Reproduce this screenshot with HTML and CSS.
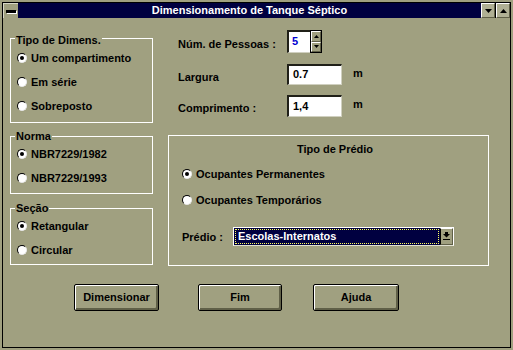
FILE: index.html
```html
<!DOCTYPE html>
<html>
<head>
<meta charset="utf-8">
<link rel="stylesheet" href="styles.css">
</head>
<body>
<div class="window">
  <div class="titlebar">
    <div class="sysmenu"><span class="sysbar"></span></div>
    <div class="caption">Dimensionamento de Tanque Séptico</div>
    <div class="tbtn"><svg width="7" height="4" viewBox="0 0 7 4"><polygon points="0,0 7,0 3.5,4" fill="#000"/></svg></div>
    <div class="tsep"></div>
    <div class="tbtn"><svg width="7" height="4" viewBox="0 0 7 4"><polygon points="0,4 7,4 3.5,0" fill="#000"/></svg></div>
  </div>
  <div class="main">
    <div class="leftcol">
      <div class="group g1">
        <div class="group-title">Tipo de Dimens.</div>
        <div class="opt"><span class="radio on"></span>Um compartimento</div>
        <div class="opt"><span class="radio"></span>Em série</div>
        <div class="opt"><span class="radio"></span>Sobreposto</div>
      </div>
      <div class="group g2">
        <div class="group-title">Norma</div>
        <div class="opt"><span class="radio on"></span>NBR7229/1982</div>
        <div class="opt"><span class="radio"></span>NBR7229/1993</div>
      </div>
      <div class="group g3">
        <div class="group-title">Seção</div>
        <div class="opt"><span class="radio on"></span>Retangular</div>
        <div class="opt"><span class="radio"></span>Circular</div>
      </div>
    </div>
    <div class="rightcol">
      <div class="frow r1">
        <div class="flabel">Núm. de Pessoas :</div>
        <div class="spin">
          <div class="spinfield">5</div>
          <div class="spinbtns">
            <div class="sbtn"><svg width="5" height="3" viewBox="0 0 5 3"><polygon points="0,3 5,3 2.5,0" fill="#000"/></svg></div>
            <div class="sbtn"><svg width="5" height="3" viewBox="0 0 5 3"><polygon points="0,0 5,0 2.5,3" fill="#000"/></svg></div>
          </div>
        </div>
      </div>
      <div class="frow r2">
        <div class="flabel">Largura</div>
        <div class="input h21">0.7</div>
        <div class="unit">m</div>
      </div>
      <div class="frow r3">
        <div class="flabel">Comprimento :</div>
        <div class="input h22">1,4</div>
        <div class="unit">m</div>
      </div>
      <div class="pbox">
        <div class="ptitle">Tipo de Prédio</div>
        <div class="popts">
          <div class="opt tall"><span class="radio on"></span>Ocupantes Permanentes</div>
          <div class="opt tall"><span class="radio"></span>Ocupantes Temporários</div>
        </div>
        <div class="prow">
          <div class="plabel">Prédio :</div>
          <div class="combo">
            <div class="combofield"><span class="combotext">Escolas-Internatos</span></div>
            <div class="combobtn"><svg width="7" height="9" viewBox="0 0 7 9"><rect x="2" y="0" width="3" height="2" fill="#000"/><polygon points="0,2 7,2 3.5,5.5" fill="#000"/><rect x="0" y="7" width="7" height="1" fill="#000"/></svg></div>
          </div>
        </div>
      </div>
    </div>
  </div>
  <div class="buttons">
    <div class="btn b1">Dimensionar</div>
    <div class="btn b2">Fim</div>
    <div class="btn b3">Ajuda</div>
  </div>
</div>
</body>
</html>
```

FILE: styles.css
```css
* { box-sizing: border-box; }
body {
  margin: 0;
  background: #a0a080;
  font: bold 11px "Liberation Sans", Arial, sans-serif;
  color: #000;
  width: 513px;
  height: 350px;
  overflow: hidden;
}
.window {
  margin: 2px;
  width: 509px;
  height: 346px;
  border: 1px solid #000;
  display: flex;
  flex-direction: column;
}
.titlebar {
  display: flex;
  height: 15px;
}
.sysmenu {
  width: 15px;
  display: flex;
  align-items: center;
  justify-content: center;
  border-top: 1px solid #d8d8c8;
  border-left: 1px solid #d8d8c8;
}
.sysbar {
  width: 10px;
  height: 3px;
  background: #000;
  box-shadow: 1px 1px 0 #fff;
}
.caption {
  flex: 1;
  background: #000040;
  color: #fff;
  text-align: center;
  line-height: 15px;
}
.tbtn {
  width: 14px;
  display: flex;
  align-items: center;
  justify-content: center;
  background: #b0b094;
  border-top: 1px solid #fff;
  border-left: 1px solid #fff;
  border-right: 1px solid #606048;
  border-bottom: 1px solid #606048;
}
.tsep { width: 1px; background: #000; }

.main {
  display: flex;
  padding-left: 7px;
  gap: 15px;
  height: 248px;
}
.leftcol { width: 143px; }
.group {
  border: 1px solid #fff;
  padding-left: 6px;
}
.group-title {
  display: block;
  width: max-content;
  margin: -7px 0 0 -2px;
  padding: 0 1px;
  line-height: 12px;
  background: #a0a080;
}
.g1 { margin-top: 20px; padding-top: 2px; padding-bottom: 4px; }
.g2 { margin-top: 13px; padding-bottom: 3px; }
.g3 { margin-top: 14px; padding-bottom: 2px; }
.opt {
  display: flex;
  align-items: center;
  height: 24px;
  gap: 4px;
  white-space: nowrap;
}
.opt.tall { height: 26px; }
.radio {
  position: relative;
  width: 10px;
  height: 10px;
  border-radius: 50%;
  background: #fff;
  border: 1px solid;
  border-color: #000 #e8e8e8 #e8e8e8 #000;
  flex: none;
}
.radio.on::after {
  content: "";
  position: absolute;
  left: 2px;
  top: 2px;
  width: 4px;
  height: 4px;
  border-radius: 50%;
  background: #000;
}

.rightcol { width: 321px; }
.frow {
  display: flex;
  align-items: flex-start;
  padding-left: 10px;
}
.r1 { margin-top: 12px; height: 23px; }
.r2 { margin-top: 11px; height: 21px; }
.r3 { margin-top: 10px; height: 22px; }
.flabel {
  width: 109px;
  line-height: 13px;
  padding-top: 7px;
  white-space: nowrap;
}
.r1 .flabel { padding-top: 8px; }
.spin {
  display: flex;
  height: 23px;
  width: 35px;
}
.spinfield {
  flex: 1;
  background: #fff;
  border-top: 2px solid #202018;
  border-left: 2px solid #202018;
  border-bottom: 1px solid #d0d0c0;
  color: #0000d0;
  padding-left: 3px;
  line-height: 19px;
}
.spinbtns {
  width: 12px;
  display: flex;
  flex-direction: column;
  border: 1px solid #000;
}
.sbtn {
  flex: 1;
  display: flex;
  align-items: center;
  justify-content: center;
  background: #a0a080;
  border-top: 1px solid #fff;
  border-left: 1px solid #fff;
  border-right: 1px solid #606048;
  border-bottom: 1px solid #606048;
}
.input {
  width: 55px;
  background: #fff;
  border-top: 2px solid #202018;
  border-left: 2px solid #202018;
  border-right: 1px solid #d0d0c0;
  border-bottom: 1px solid #d0d0c0;
  padding-left: 4px;
  line-height: 17px;
}
.h21 { height: 21px; }
.h22 { height: 22px; line-height: 18px; }
.unit {
  margin-left: 11px;
  padding-top: 3px;
  line-height: 13px;
}
.pbox {
  margin-top: 18px;
  height: 131px;
  border: 1px solid #fff;
  padding-left: 13px;
}
.ptitle {
  text-align: center;
  padding-top: 7px;
  line-height: 13px;
}
.popts { margin-top: 5px; }
.prow {
  display: flex;
  align-items: center;
  margin-top: 14px;
}
.plabel { width: 51px; }
.combo {
  display: flex;
  width: 221px;
  height: 19px;
  border: 1px solid #fff;
  border-bottom-color: #e0e0d0;
}
.combofield {
  flex: 1;
  background: #000040;
  padding: 1px;
  display: flex;
}
.combotext {
  flex: 1;
  color: #fff;
  border: 1px dotted #ffff60;
  padding-left: 2px;
  line-height: 13px;
}
.combobtn {
  width: 13px;
  display: flex;
  align-items: center;
  justify-content: center;
  background: #a0a080;
  border-left: 1px solid #000;
  border-top: 1px solid #fff;
  border-right: 1px solid #606048;
  border-bottom: 1px solid #606048;
}

.buttons {
  display: flex;
  margin-top: 18px;
  padding-left: 71px;
}
.btn {
  height: 27px;
  border: 1px solid #000;
  border-radius: 2px;
  box-shadow: inset 1px 1px 0 #fff, inset -2px -2px 0 #606048;
  display: flex;
  align-items: center;
  justify-content: center;
  padding-bottom: 1px;
}
.b1 { width: 85px; }
.b2 { width: 84px; margin-left: 39px; }
.b3 { width: 86px; margin-left: 31px; }
```
